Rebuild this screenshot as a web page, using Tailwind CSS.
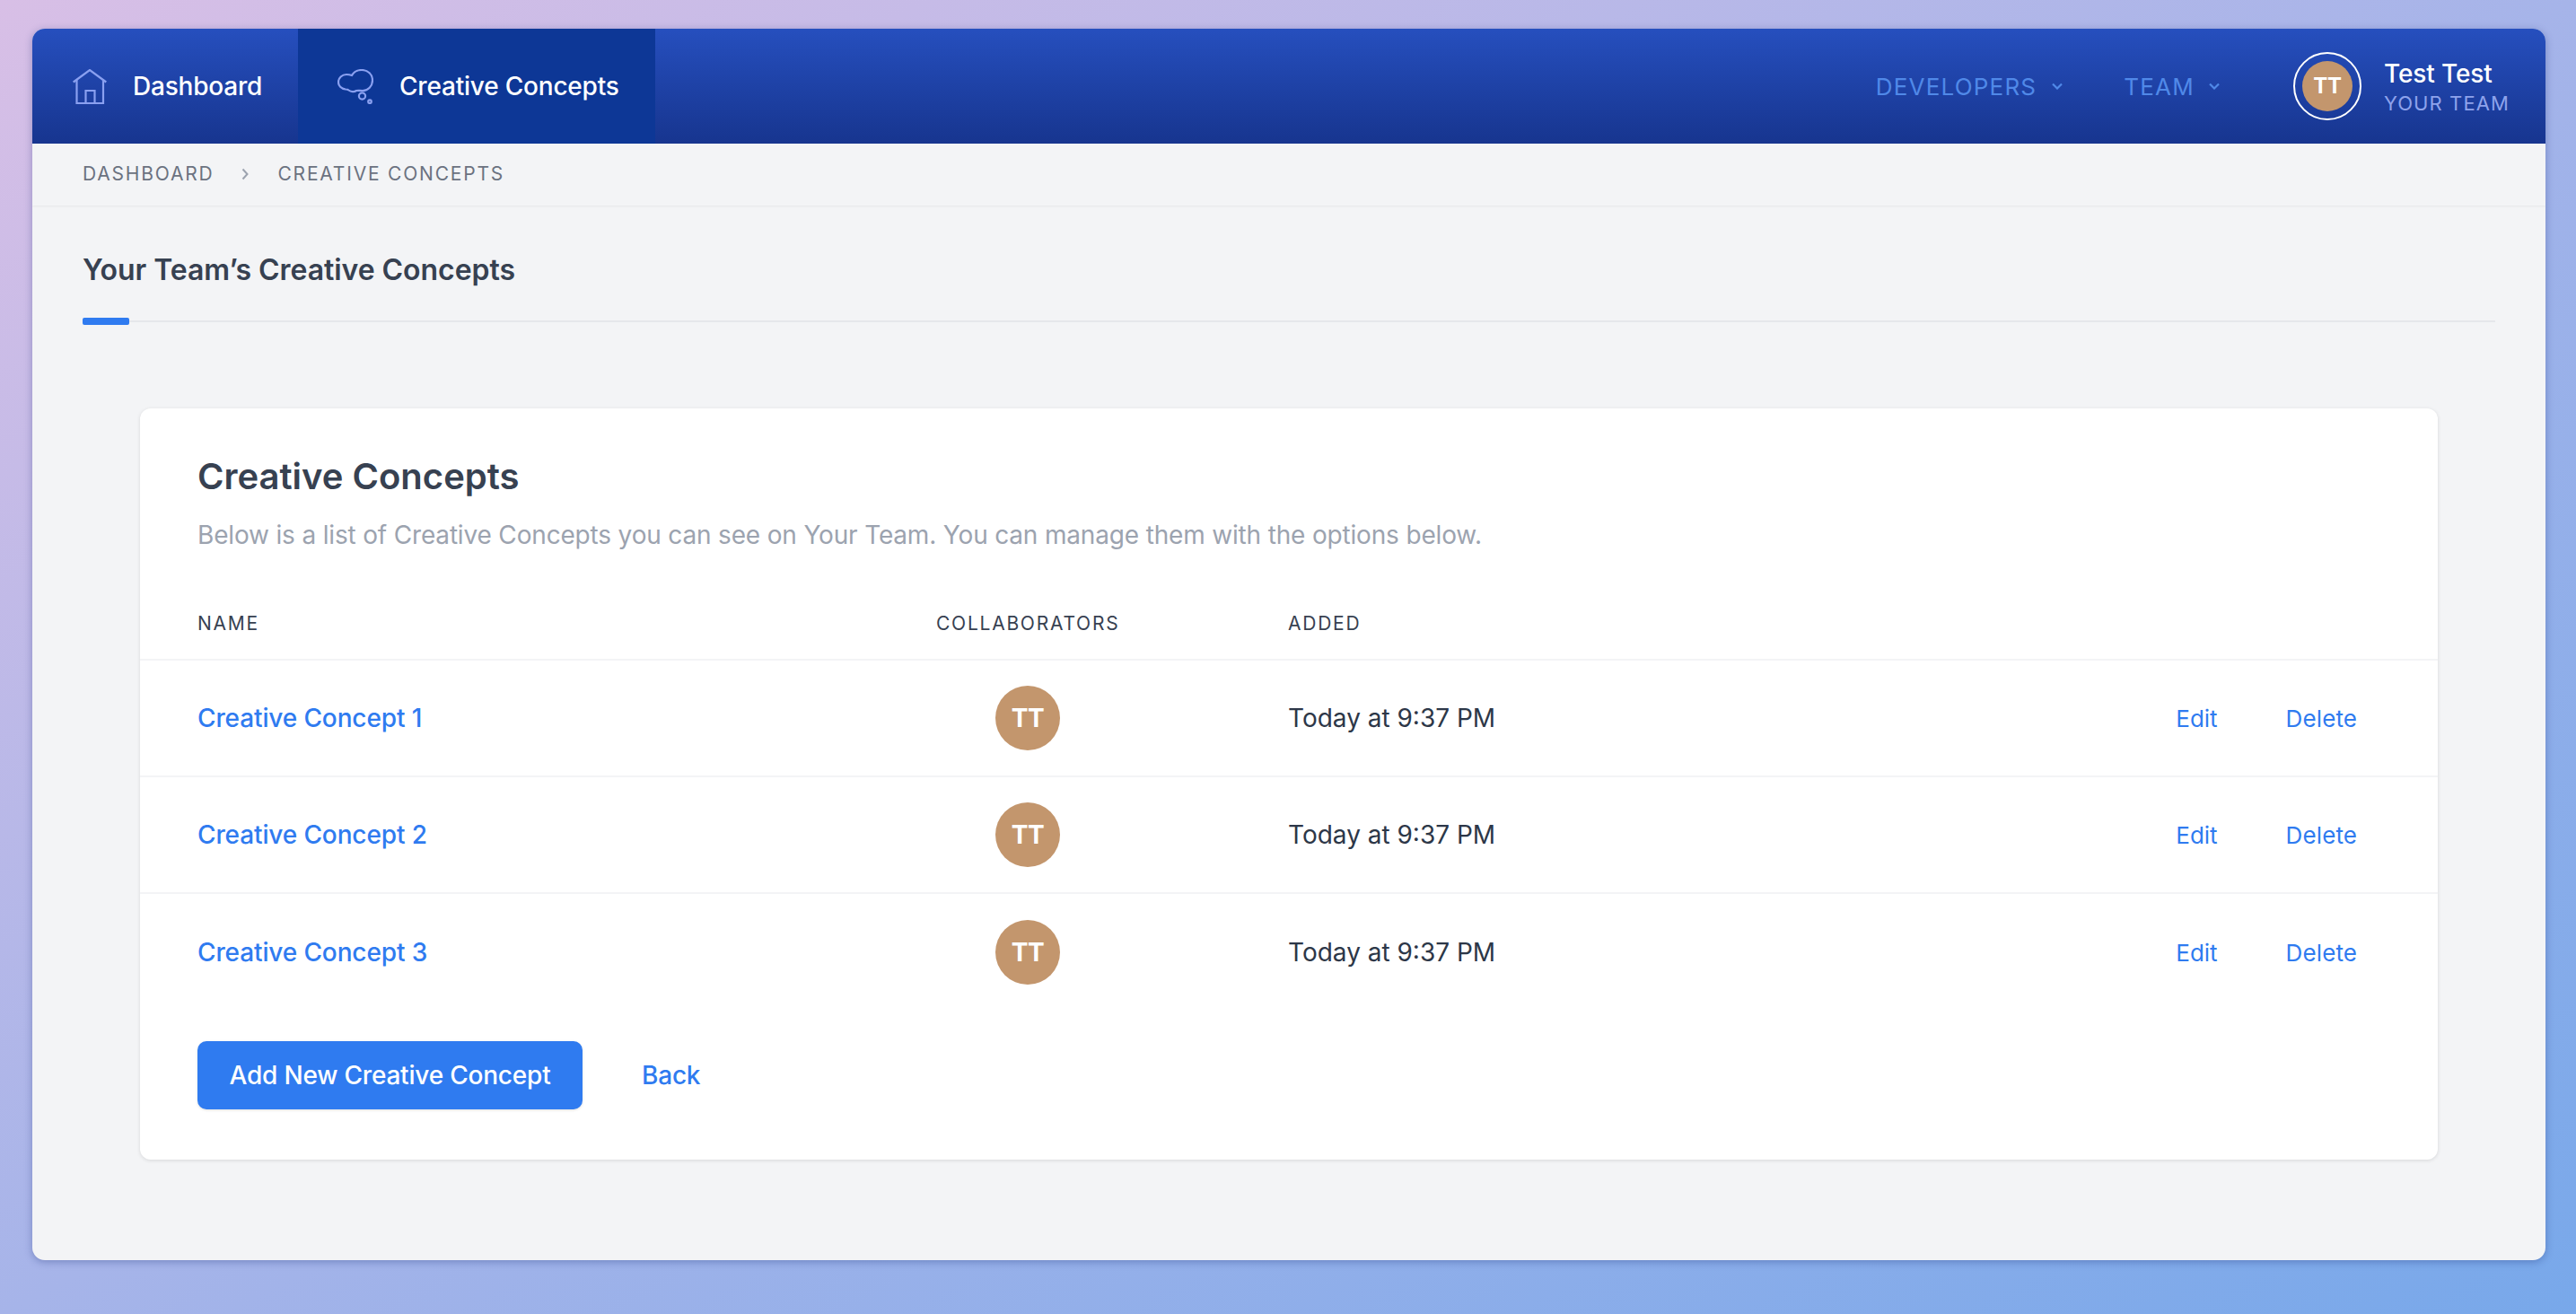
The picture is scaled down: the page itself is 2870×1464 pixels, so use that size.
<!DOCTYPE html>
<html lang="en">
<head>
  <meta charset="UTF-8" />
  <title>Creative Concepts</title>
  <script src="https://cdn.jsdelivr.net/npm/@tailwindcss/browser@4"></script>
</head>
<body class="h-[1464px] overflow-hidden bg-[linear-gradient(to_bottom_right,#d8bfe6_0%,#a6b4e9_50%,#78a8ea_100%)] pt-[32px] pl-[36px] pr-[34px] font-['Inter',sans-serif]">
  <div class="h-[1372px] flex flex-col rounded-[14px] bg-[#f3f4f6] overflow-hidden shadow-[0_2px_8px_rgba(30,50,120,0.35)]">

    <!-- Top nav -->
    <nav class="h-[128px] shrink-0 flex items-stretch bg-gradient-to-b from-[#264fbe] to-[#17358f]">
      <a class="w-[296px] flex items-center pl-[45px] text-[28px] tracking-[-0.2px] font-medium text-white">
        <svg class="w-[38px] h-[39px] mr-[29px] shrink-0" viewBox="0 0 38 39" fill="none" stroke="#8aa0f0" stroke-width="2.2">
          <path d="M0.7 14.5 19 1 37.3 14.5" />
          <path d="M4.5 11.5V38H34V11.5" />
          <path d="M14.5 38V24H24.5V38" />
        </svg>
        Dashboard
      </a>
      <a class="w-[398px] flex items-center pl-[44px] text-[28px] tracking-[-0.2px] font-medium text-white bg-[#0d3796]">
        <svg class="w-[40px] h-[39px] mr-[29px] shrink-0" viewBox="0 0 40 39" fill="none" stroke="#8aa0f0" stroke-width="2.2">
          <path d="M16 7C18.5 2.5 23 1 27 1 34 1 39 6 39 12.5 39 19 34 24 28 24 25 24 23 23.5 21 24 19 25.5 15 25.5 12.5 23.5 11.5 22.5 10 22.5 9 22.5 4 22 1 18.5 1 14.5 1 10 5 6 10 6 12 6 14 6.3 16 7Z" />
          <circle cx="27.5" cy="30" r="3.6" />
          <circle cx="36" cy="36.2" r="1.8" />
        </svg>
        Creative Concepts
      </a>
      <div class="flex-1 flex items-center justify-end pr-[40px]">
        <a class="flex items-center text-[26px] tracking-[1.2px] text-[#5089e8] uppercase">
          Developers
          <svg class="w-[12px] h-[8px] ml-[17px]" viewBox="0 0 12 8" fill="none" stroke="#5089e8" stroke-width="2.2"><path d="M1 1.5 6 6.5 11 1.5" /></svg>
        </a>
        <a class="flex items-center ml-[68px] text-[26px] tracking-[1.2px] text-[#5089e8] uppercase">
          Team
          <svg class="w-[12px] h-[8px] ml-[16px]" viewBox="0 0 12 8" fill="none" stroke="#5089e8" stroke-width="2.2"><path d="M1 1.5 6 6.5 11 1.5" /></svg>
        </a>
        <div class="ml-[82px] w-[76px] h-[76px] rounded-full border-2 border-white flex items-center justify-center">
          <div class="w-[56px] h-[56px] rounded-full bg-[#c3966d] flex items-center justify-center text-[24px] font-bold tracking-[-0.5px] text-white">TT</div>
        </div>
        <div class="ml-[25px] pt-[3px] flex flex-col">
          <span class="text-[28px] leading-[34px] font-medium tracking-[-0.1px] text-white">Test Test</span>
          <span class="text-[22px] leading-[32px] tracking-[1.1px] text-[#8ea3ec] uppercase">Your Team</span>
        </div>
      </div>
    </nav>

    <!-- Breadcrumb -->
    <div class="h-[69px] shrink-0 flex items-center pl-[56px] pb-[2px] text-[21px] tracking-[1.8px] text-[#6b7280] uppercase shadow-[0_1px_2px_rgba(0,0,0,0.06)]">
      <span>Dashboard</span>
      <svg class="w-[8px] h-[14px] ml-[31px] mr-[32px]" viewBox="0 0 8 14" fill="none" stroke="#9ca3af" stroke-width="2"><path d="M1.5 1.5 6.5 7 1.5 12.5" /></svg>
      <span>Creative Concepts</span>
    </div>

    <!-- Page heading -->
    <div class="mx-[56px] mt-[47px] relative border-b-2 border-[#e5e7eb] pb-[31px]">
      <h1 class="text-[32px] leading-[50px] tracking-[-0.05px] font-semibold text-[#374151]">Your Team’s Creative Concepts</h1>
      <div class="absolute left-0 bottom-[-5px] w-[52px] h-[8px] rounded-[2px] bg-[#2f7bf0]"></div>
    </div>

    <!-- Card -->
    <div class="mx-[120px] mt-[96px] h-[837px] rounded-[12px] bg-white shadow-[0_1px_4px_rgba(0,0,0,0.12)]">
      <div class="px-[64px] pt-[51px]">
        <h2 class="text-[40px] leading-[50px] font-semibold text-[#374151]">Creative Concepts</h2>
        <p class="mt-[19px] text-[28px] leading-[42px] tracking-[-0.17px] text-[#9ca3af]">Below is a list of Creative Concepts you can see on Your Team. You can manage them with the options below.</p>
      </div>

      <div class="mt-[63px] h-[56px] px-[64px] grid grid-cols-[823px_204px_1fr] items-start text-[21px] leading-[30px] tracking-[1.75px] text-[#374151] uppercase border-b-2 border-[#f3f4f6]">
        <span>Name</span>
        <span>Collaborators</span>
        <span class="ml-[188px]">Added</span>
      </div>

      <div class="h-[130px] px-[64px] grid grid-cols-[823px_204px_1fr_auto] items-center border-b-2 border-[#f3f4f6] text-[28px]">
        <a class="font-medium tracking-[-0.12px] text-[#2f7bf0]">Creative Concept 1</a>
        <div class="w-[72px] h-[72px] mx-auto rounded-full bg-[#c3966d] flex items-center justify-center text-[28px] font-bold tracking-[-0.5px] text-white">TT</div>
        <span class="ml-[188px] text-[#2d3748]">Today at 9:37 PM</span>
        <div class="flex pr-[26px] text-[26px] text-[#2f7bf0]"><a>Edit</a><a class="ml-[76px] tracking-[0.1px]">Delete</a></div>
      </div>
      <div class="h-[130px] px-[64px] grid grid-cols-[823px_204px_1fr_auto] items-center border-b-2 border-[#f3f4f6] text-[28px]">
        <a class="font-medium tracking-[-0.12px] text-[#2f7bf0]">Creative Concept 2</a>
        <div class="w-[72px] h-[72px] mx-auto rounded-full bg-[#c3966d] flex items-center justify-center text-[28px] font-bold tracking-[-0.5px] text-white">TT</div>
        <span class="ml-[188px] text-[#2d3748]">Today at 9:37 PM</span>
        <div class="flex pr-[26px] text-[26px] text-[#2f7bf0]"><a>Edit</a><a class="ml-[76px] tracking-[0.1px]">Delete</a></div>
      </div>
      <div class="h-[130px] px-[64px] grid grid-cols-[823px_204px_1fr_auto] items-center text-[28px]">
        <a class="font-medium tracking-[-0.12px] text-[#2f7bf0]">Creative Concept 3</a>
        <div class="w-[72px] h-[72px] mx-auto rounded-full bg-[#c3966d] flex items-center justify-center text-[28px] font-bold tracking-[-0.5px] text-white">TT</div>
        <span class="ml-[188px] text-[#2d3748]">Today at 9:37 PM</span>
        <div class="flex pr-[26px] text-[26px] text-[#2f7bf0]"><a>Edit</a><a class="ml-[76px] tracking-[0.1px]">Delete</a></div>
      </div>

      <div class="mt-[34px] px-[64px] flex items-center">
        <button class="w-[429px] h-[76px] rounded-[10px] bg-[#2f7bf0] text-[28px] tracking-[-0.2px] font-medium text-white shadow-[0_1px_3px_rgba(0,0,0,0.12)]">Add New Creative Concept</button>
        <a class="ml-[66px] text-[28px] font-medium tracking-[-0.2px] text-[#2f7bf0]">Back</a>
      </div>
    </div>
  </div>
</body>
</html>
